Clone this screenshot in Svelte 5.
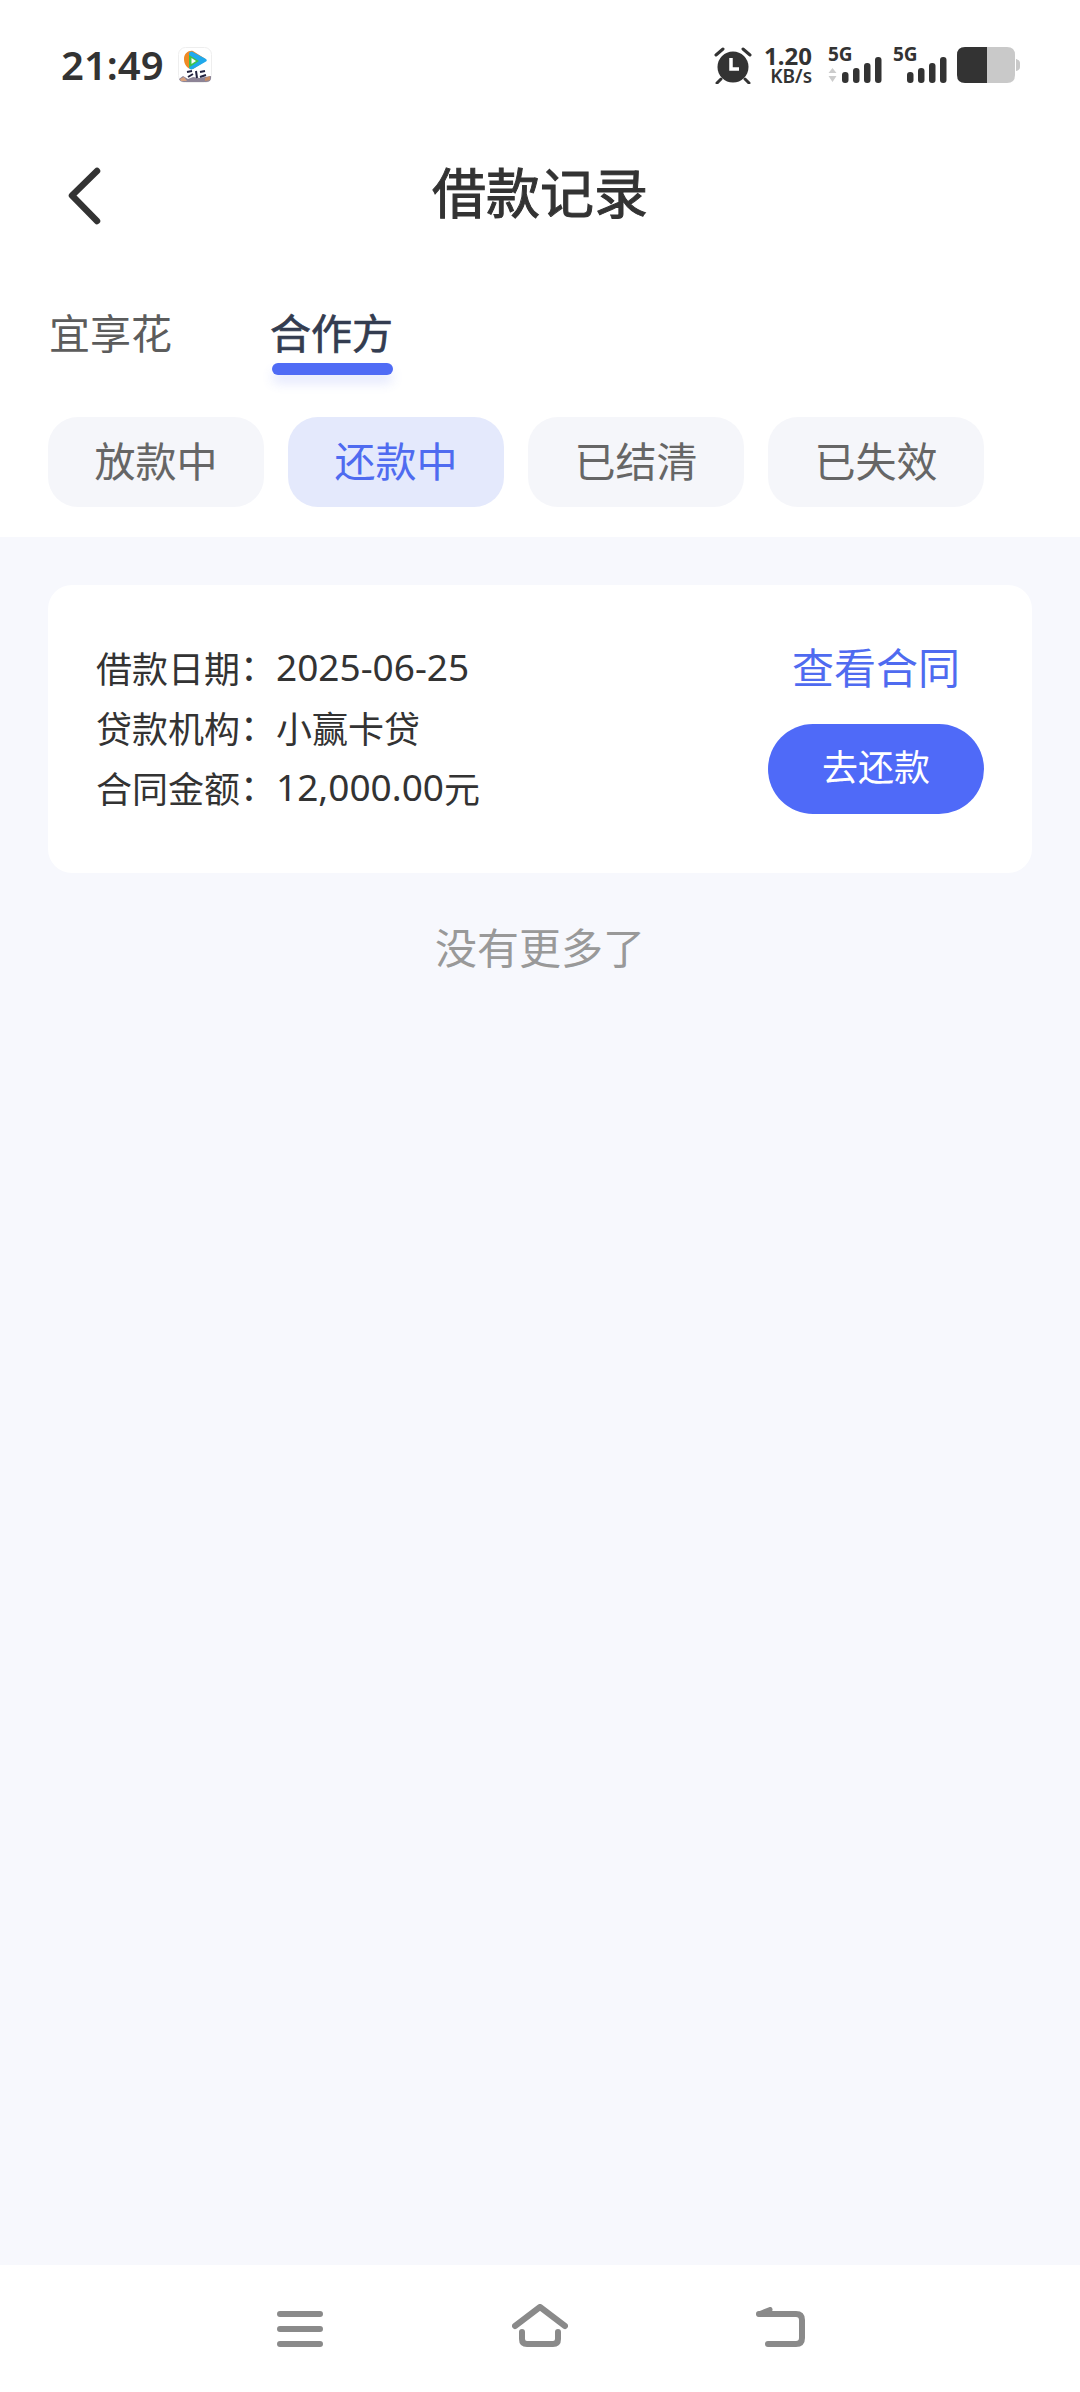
<script>
  const chips = [
    { label: '放款中' },
    { label: '还款中', active: true },
    { label: '已结清' },
    { label: '已失效' }
  ];
  const rows = [
    { k: '借款日期', num: '2025-06-25' },
    { k: '贷款机构', text: '小赢卡贷' },
    { k: '合同金额', num: '12,000.00', text: '元' }
  ];
</script>

<main>
  <header>
    <div class="status">
      <div class="left">
        <span class="time">21:49</span>
        <svg class="app" width="34" height="36" viewBox="0 0 34 36">
          <rect x="0.5" y="0.5" width="33" height="35" rx="7" fill="#fff" stroke="#eee"/>
          <path d="M6 12 C6 6 11 3 15 4 L26 11 C28 12 28 14 26 15 L15 22 C10 23 6 18 6 12Z" fill="#f08a24"/>
          <path d="M11 7 C11 5 13 4 15 5 L28 12 C29 13 29 14 28 14.500 L15 22 C13 23 11 22 11 20Z" fill="#1fa9ec"/>
          <path d="M11 8 L21 14 L11 20.500Z" fill="#3fc24a"/>
          <path d="M13.500 11 L18 14 L13.500 17Z" fill="#fff"/>
          <path d="M1 32 L5 29 L10 32 L15 30 L22 31 L27 30 L33 29 L33 31 Q33 35 28 35 L6 35 Q2 35 1 32Z" fill="#8d8496"/>
          <path d="M9 25 L14 24 M10 30 L15 27 M18 24 L19 31 M22 25 L27 24 M22 30 L28 28" stroke="#23233f" stroke-width="2" fill="none"/>
          <path d="M2 32 L6 30 L9 34 L3 34Z" fill="#d9a27e"/>
          <path d="M27 31 L32 29 L32 33 L27 34Z" fill="#c98d63"/>
        </svg>
      </div>
      <div class="right">
        <svg class="alarm" width="38" height="37" viewBox="0 0 38 37">
          <circle cx="19" cy="20" r="15.500" fill="#333"/>
          <path d="M17 11 V22 H25" fill="none" stroke="#fff" stroke-width="3.500"/>
          <path d="M2 8 L9 2 M36 8 L29 2 M7 32 L3 36 M31 32 L35 36" stroke="#333" stroke-width="3" stroke-linecap="round"/>
        </svg>
        <div class="speed"><b>1.20</b><span>KB/s</span></div>
        <div class="signal first">
          <span class="g5">5G</span>
          <svg width="54" height="36" viewBox="0 0 54 36">
            <path d="M4.500 21 L8.500 26 H0.500Z M4.500 35 L8.500 29 H0.500Z" fill="#ccc"/>
            <rect x="14" y="25" width="6.500" height="11" rx="3" fill="#333"/>
            <rect x="25" y="21" width="6.500" height="15" rx="3" fill="#333"/>
            <rect x="36" y="16" width="6.500" height="20" rx="3" fill="#333"/>
            <rect x="47" y="10" width="6.500" height="26" rx="3" fill="#333"/>
          </svg>
        </div>
        <div class="signal second">
          <span class="g5">5G</span>
          <svg width="54" height="36" viewBox="0 0 54 36">
            <rect x="14" y="25" width="6.500" height="11" rx="3" fill="#333"/>
            <rect x="25" y="21" width="6.500" height="15" rx="3" fill="#333"/>
            <rect x="36" y="16" width="6.500" height="20" rx="3" fill="#333"/>
            <rect x="47" y="10" width="6.500" height="26" rx="3" fill="#333"/>
          </svg>
        </div>
        <svg class="battery" width="63" height="36" viewBox="0 0 63 36">
          <path d="M30 0 H50 Q58 0 58 8 V28 Q58 36 50 36 H30Z" fill="#c9c9c9"/>
          <path d="M59 12 Q63 13 63 16 V20 Q63 23 59 24Z" fill="#c9c9c9"/>
          <path d="M30 0 H8 Q0 0 0 8 V28 Q0 36 8 36 H30Z" fill="#333"/>
        </svg>
      </div>
    </div>

    <div class="nav">
      <svg class="back" width="34" height="58" viewBox="0 0 34 58">
        <path d="M30 4 L5 28.500 L30 54" fill="none" stroke="#333" stroke-width="6.500" stroke-linecap="round" stroke-linejoin="round"/>
      </svg>
      <h1>借款记录</h1>
    </div>

    <div class="tabs">
      <div class="tab">宜享花</div>
      <div class="tab on">合作方</div>
    </div>

    <div class="chips">
      {#each chips as c}
        <div class="chip" class:active={c.active}>{c.label}</div>
      {/each}
    </div>
  </header>

  <section class="page">
    <div class="card">
      <div class="info">
        {#each rows as r}
          <div class="row">
            <span class="k">{r.k}<span class="colon">：</span></span>
            {#if r.num}<span class="num">{r.num}</span>{/if}
            {#if r.text}<span>{r.text}</span>{/if}
          </div>
        {/each}
      </div>
      <div class="actions">
        <div class="link">查看合同</div>
        <div class="btn">去还款</div>
      </div>
    </div>
    <p class="more">没有更多了</p>
  </section>

  <footer>
    <svg width="46" height="36" viewBox="0 0 46 36">
      <path d="M3 3 H43 M3 18 H43 M3 33 H43" stroke="#8a8a8a" stroke-width="6" stroke-linecap="round"/>
    </svg>
    <svg width="56" height="43" viewBox="0 0 56 43">
      <path d="M3 22 L28 3 L53 22" fill="none" stroke="#8a8a8a" stroke-width="6" stroke-linecap="round" stroke-linejoin="round"/>
      <path d="M10 28 V35 Q10 40 15 40 H41 Q46 40 46 35 V28" fill="none" stroke="#8a8a8a" stroke-width="6" stroke-linecap="round"/>
    </svg>
    <svg width="49" height="40" viewBox="0 0 49 40">
      <path d="M3 7 H40 Q46 7 46 13 V31 Q46 37 40 37 H12" fill="none" stroke="#8a8a8a" stroke-width="6" stroke-linecap="round"/>
      <path d="M3 7 L14 2.500" fill="none" stroke="#8a8a8a" stroke-width="5" stroke-linecap="round"/>
    </svg>
  </footer>
</main>

<style>
  :global(body) {
    margin: 0;
    padding: 0;
    background: #fff;
    font-family: "Noto Sans CJK SC", "Noto Sans", sans-serif;
  }

  main {
    width: 1080px;
    height: 2392px;
    display: flex;
    flex-direction: column;
    overflow: hidden;
  }

  header {
    height: 537px;
    flex: none;
    background: #fff;
  }

  .status {
    height: 130px;
    display: flex;
    justify-content: space-between;
    align-items: center;
    padding: 0 60px 0 61px;
  }

  .left, .right {
    display: flex;
    align-items: center;
  }

  .time {
    font-family: "Noto Sans", sans-serif;
    font-size: 40px;
    font-weight: 600;
    color: #333;
    line-height: 1;
    margin-right: 14px;
  }

  .alarm { margin-right: 12px; }

  .speed {
    display: flex;
    flex-direction: column;
    align-items: flex-end;
    font-family: "Noto Sans", sans-serif;
    color: #333;
    margin-right: 16px;
    line-height: 1;
  }

  .speed b {
    font-size: 24px;
    font-weight: 700;
    line-height: 23px;
  }

  .speed span {
    font-size: 19px;
    font-weight: 600;
    line-height: 19px;
  }

  .signal {
    position: relative;
    width: 54px;
    height: 36px;
    margin-right: 11px;
  }

  .signal.second { margin-right: 10px; }

  .signal svg { display: block; }

  .g5 {
    position: absolute;
    left: 0;
    top: -2px;
    font-family: "Noto Sans", sans-serif;
    font-size: 19px;
    font-weight: 700;
    line-height: 18px;
    color: #333;
  }

  .nav {
    height: 126px;
    display: flex;
    align-items: center;
    justify-content: center;
    position: relative;
  }

  .back {
    position: absolute;
    left: 67px;
    top: 37px;
  }

  h1 {
    margin: 0 0 6px;
    font-size: 54px;
    font-weight: 400;
    -webkit-text-stroke: 1px #333;
    color: #333;
  }

  .tabs {
    display: flex;
    gap: 98px;
    padding-left: 49px;
    height: 122px;
    margin-top: 39px;
  }

  .tab {
    position: relative;
    height: 66px;
    font-size: 41px;
    line-height: 60px;
    padding-top: 6px;
    color: #5c5c5c;
  }

  .tab.on {
    color: #333c50;
    -webkit-text-stroke: 0.7px #333c50;
  }

  .tab.on::after {
    content: '';
    position: absolute;
    left: 2px;
    right: 0;
    top: 68px;
    height: 12px;
    border-radius: 6px;
    background: #4f6bf5;
    box-shadow: 0 8px 12px rgba(79, 107, 245, 0.16);
  }

  .chips {
    display: flex;
    gap: 24px;
    padding: 0 48px;
  }

  .chip {
    width: 216px;
    height: 90px;
    border-radius: 30px;
    background: #f5f6fa;
    color: #666;
    font-size: 41px;
    line-height: 84px;
    text-align: center;
  }

  .chip.active {
    background: #e4e9fc;
    color: #4f6bf0;
  }

  .page {
    flex: 1;
    background: #f7f8fd;
    padding: 48px 48px 0;
  }

  .card {
    height: 288px;
    box-sizing: border-box;
    background: #fff;
    border-radius: 24px;
    padding: 54px 48px 0;
    display: flex;
    justify-content: space-between;
  }

  .info { margin-top: -2px; }

  .row {
    display: flex;
    height: 60px;
    line-height: 60px;
    font-size: 36px;
    color: #333;
  }

  .k {
    width: 180px;
    flex: none;
  }

  .colon {
    font-family: "Noto Sans CJK TC", sans-serif;
    font-feature-settings: "halt";
  }

  .num {
    font-family: "Noto Sans", sans-serif;
    font-size: 37px;
  }

  .actions {
    width: 216px;
    display: flex;
    flex-direction: column;
    align-items: center;
    margin-top: -3px;
  }

  .link {
    color: #4f6bf0;
    font-size: 42px;
    line-height: 60px;
    margin-bottom: 28px;
  }

  .btn {
    width: 216px;
    height: 90px;
    border-radius: 45px;
    background: #4f6af8;
    color: #fff;
    font-size: 36px;
    line-height: 82px;
    text-align: center;
  }

  .more {
    margin: 43px 0 0;
    font-size: 42px;
    line-height: 60px;
    text-align: center;
    color: #999;
  }

  footer {
    height: 127px;
    flex: none;
    background: #fff;
    box-sizing: border-box;
    padding: 0 0 45px 277px;
    display: flex;
    align-items: flex-end;
    gap: 188.500px;
  }
</style>
